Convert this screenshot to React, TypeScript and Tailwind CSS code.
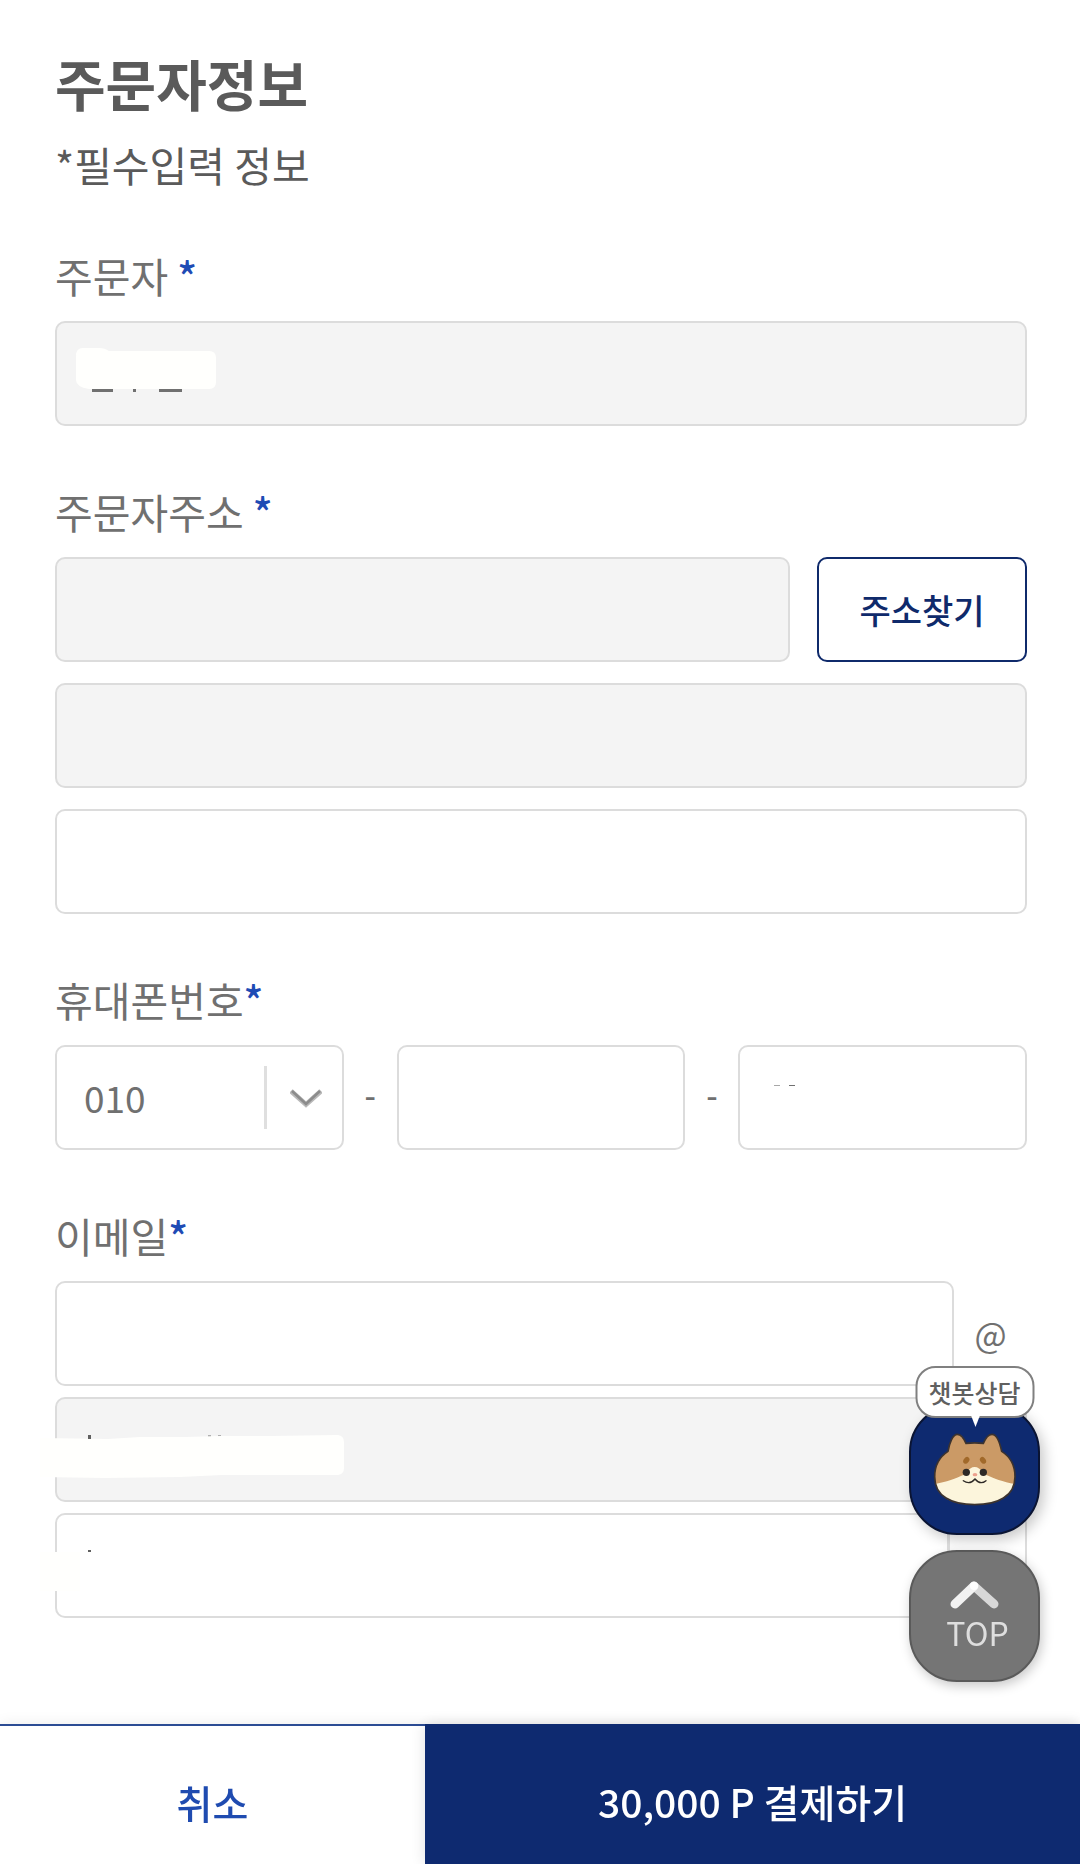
import React, { useState } from 'react';

const fieldBase = 'block h-[105px] w-full rounded-[10px] border-2 border-[#dcdcdc] px-[27px] text-[37px] text-[#707070] outline-none';

const Required = () => <span className="font-medium text-[#1e4bb5]">*</span>;

interface FieldProps {
  id: string;
  label: string;
  spaced?: boolean;
  children: React.ReactNode;
}

const Field: React.FC<FieldProps> = ({ id, label, spaced, children }) => (
  <section className="flex flex-col gap-[16px]">
    <label htmlFor={id} className="block text-[41px] leading-[60px] text-[#707070]">
      {label}{spaced ? ' ' : ''}<Required />
    </label>
    {children}
  </section>
);

interface SelectProps {
  id: string;
  label?: string;
  value: string;
  options: string[];
  onChange: (value: string) => void;
}

const Select: React.FC<SelectProps> = ({ id, label, value, options, onChange }) => (
  <div className="relative min-w-0 flex-1">
    <select
      id={id}
      aria-label={label}
      value={value}
      onChange={(e) => onChange(e.target.value)}
      className={`${fieldBase} appearance-none bg-white`}
    >
      {options.map((o) => <option key={o} value={o}>{o}</option>)}
    </select>
    <span className="pointer-events-none absolute inset-y-[21px] right-[77px] w-[3px] bg-[#dfdfdf]" />
    <svg className="pointer-events-none absolute right-[22px] top-[43px] h-[20px] w-[32px]" viewBox="0 0 32 20" fill="none">
      <path d="M1 3 L16 16.5 L31 3" stroke="#b8b8b8" strokeWidth="5" />
      <path d="M2 3 L16 16 L30 3" stroke="#8c8c8c" strokeWidth="2.6" />
    </svg>
  </div>
);

const Dash = () => (
  <span className="w-[53px] shrink-0 pb-[8px] text-center text-[32px] font-medium leading-[48px] text-[#707070]">-</span>
);

const faceOutline = 'M66 91 C70 67 80 40 94 40 C107 40 114 53 120 67 Q146 64 172 67 C178 53 186 40 198 40 C212 40 222 67 227 91 C251 106 267 132 267 167 C267 226 215 251 146 251 C77 251 26 226 26 167 C26 132 43 106 66 91 Z';

// Shiba face used on the chatbot button
const ChatbotFace = () => (
  <svg className="h-[77px] w-[88px]" viewBox="15 30 264 231">
    <defs>
      <clipPath id="face">
        <path d={faceOutline} />
      </clipPath>
    </defs>
    <g clipPath="url(#face)">
      <rect x="15" y="30" width="264" height="231" fill="#cb9a66" />
      <path d="M15 191 C55 186 92 172 110 163 C126 160 126 138 146 138 C166 138 166 160 183 163 C203 172 237 186 279 191 V261 H15 Z" fill="#fcf5dc" />
    </g>
    <path d={faceOutline} fill="none" stroke="#3c332f" strokeWidth="5" />
    <ellipse cx="121" cy="118" rx="8" ry="11" transform="rotate(38 121 118)" fill="#a1692a" />
    <ellipse cx="171" cy="118" rx="8" ry="11" transform="rotate(-38 171 118)" fill="#a1692a" />
    <circle cx="121" cy="154" r="11" fill="#2d2926" />
    <circle cx="172" cy="154" r="11" fill="#2d2926" />
    <ellipse cx="147" cy="161" rx="7" ry="5" fill="#eda08d" />
    <path d="M112 179 Q131 193 147 174 Q163 193 180 179" fill="none" stroke="#2d2926" strokeWidth="4" strokeLinecap="round" />
  </svg>
);

const App: React.FC = () => {
  const [phonePrefix, setPhonePrefix] = useState('010');
  const [emailDomain, setEmailDomain] = useState('');

  return (
    <div className="flex min-h-screen flex-col bg-white font-['Noto_Sans_CJK_KR',sans-serif]">
      <main className="flex-1 px-[53px] pb-[105px] pl-[55px] pt-[42px]">
        <h1 className="text-[55px] font-bold leading-[80px] text-[#5a5a5a]">주문자정보</h1>
        <p className="mt-[12px] text-[41px] leading-[60px] text-[#5a5a5a]">*필수입력 정보</p>

        <form className="mt-[51px] flex flex-col gap-[55px]" onSubmit={(e) => e.preventDefault()}>
          <Field id="name" label="주문자" spaced>
            <div className="relative">
              <input id="name" type="text" readOnly className={`${fieldBase} bg-[#f4f4f4]`} />
              <svg className="pointer-events-none absolute left-[20px] top-[26px] h-[46px] w-[142px]" viewBox="0 0 142 46">
                <path d="M17 41 h21 v4 h-21 z M58 41 h3 v4 h-3 z M84 41 h23 v4 h-23 z" fill="#707070" />
                <path d="M8 1 H24 Q30 1 34 4 H134 Q141 4 141 11 V35 Q141 42 134 42 H14 Q1 40 1 33 V9 Q1 1 8 1 Z" fill="#fffffd" />
              </svg>
            </div>
          </Field>

          <Field id="zip" label="주문자주소" spaced>
            <div className="flex flex-col gap-[21px]">
              <div className="flex gap-[27px]">
                <div className="min-w-0 flex-1">
                  <input id="zip" type="text" readOnly className={`${fieldBase} bg-[#f4f4f4]`} />
                </div>
                <button type="button" className="h-[105px] w-[210px] shrink-0 rounded-[10px] border-2 border-[#0f2a6b] bg-white text-[34px] font-medium text-[#0f2a6b]">
                  주소찾기
                </button>
              </div>
              <input type="text" readOnly aria-label="기본주소" className={`${fieldBase} bg-[#f4f4f4]`} />
              <input type="text" aria-label="상세주소" className={`${fieldBase} bg-white`} />
            </div>
          </Field>

          <Field id="phone" label="휴대폰번호">
            <div className="flex items-center">
              <Select id="phone" value={phonePrefix} options={['010', '011', '016', '017', '018', '019']} onChange={setPhonePrefix} />
              <Dash />
              <div className="min-w-0 flex-1">
                <input type="tel" aria-label="휴대폰번호 가운데 자리" className={`${fieldBase} bg-white`} />
              </div>
              <Dash />
              <div className="relative min-w-0 flex-1">
                <input type="tel" aria-label="휴대폰번호 끝자리" className={`${fieldBase} bg-white`} />
                <svg className="pointer-events-none absolute left-[34px] top-[38px] h-[4px] w-[26px]" viewBox="0 0 26 4">
                  <path d="M2 2.5 h6" stroke="#a8a8a8" />
                  <path d="M17 2.5 h6" stroke="#707070" />
                </svg>
              </div>
            </div>
          </Field>

          <Field id="email" label="이메일">
            <div className="flex flex-col gap-[11px]">
              <div className="flex items-center">
                <div className="min-w-0 flex-1">
                  <input id="email" type="text" className={`${fieldBase} bg-white`} />
                </div>
                <span className="w-[73px] shrink-0 text-center text-[34px] leading-[48px] text-[#707070]">@</span>
              </div>
              <div className="relative">
                <input type="text" readOnly aria-label="이메일 도메인" className={`${fieldBase} bg-[#f4f4f4]`} />
                <svg className="pointer-events-none absolute -left-[15px] top-[37px] h-[46px] w-[306px]" viewBox="0 0 306 46">
                  <path d="M168 1 h3 v3 h-3 z M178 1 h3 v3 h-3 z" fill="#b0b0b0" />
                  <path d="M0 4 L68 5 L100 3 L145 3 L180 2 L230 2 L298 1 Q304 2 304 8 V34 Q304 40 298 41 L182 41 L140 43 L65 44 L0 43 Z" fill="#fffffd" />
                  <path d="M48 1 h3 v4 h-3 z" fill="#606060" />
                </svg>
              </div>
              <div className="relative flex">
                <Select id="email-domain" label="이메일 도메인 선택" value={emailDomain} options={['', 'naver.com', 'gmail.com', 'daum.net']} onChange={setEmailDomain} />
                <svg className="pointer-events-none absolute -left-[15px] top-[35px] h-[44px] w-[60px]" viewBox="0 0 60 44">
                  <path d="M0 4 H40 V43 H0 Z" fill="#fffffd" />
                  <path d="M48 2 h3 v2 h-3 z" fill="#606060" />
                </svg>
              </div>
            </div>
          </Field>
        </form>
      </main>

      <div className="fixed bottom-[182px] right-[40px] flex flex-col items-center gap-[15px]">
        <button type="button" className="relative flex h-[131px] w-[131px] items-center justify-center rounded-[48px] border-2 border-[#0a1433] bg-[#0e2a70] shadow-[4px_5px_14px_rgba(0,0,0,0.22)]">
          <ChatbotFace />
          <span className="absolute -top-[40px] left-1/2 flex h-[52px] w-[119px] -translate-x-1/2 items-center justify-center rounded-[20px] border-2 border-[#808080] bg-white text-[25px] font-medium leading-[36px] text-[#606060]">
            챗봇상담
            <svg className="absolute left-[53px] top-[46px] h-[14px] w-[10px]" viewBox="0 0 10 14">
              <path d="M0 0 H10 L5 13 Z" fill="#fff" />
            </svg>
          </span>
        </button>
        <button
          type="button"
          onClick={() => window.scrollTo({ top: 0, behavior: 'smooth' })}
          className="flex h-[132px] w-[131px] flex-col items-center rounded-[48px] border-2 border-[#5a5a5a] bg-[#757575] pt-[26px] text-[#dedede] shadow-[2px_4px_12px_rgba(0,0,0,0.22)]"
        >
          <svg className="h-[32px] w-[50px]" viewBox="0 0 50 32" fill="none" strokeWidth="9" strokeLinecap="round">
            <path d="M24 8 L44 26" stroke="#d8d8d8" />
            <path d="M24 8 L5 26" stroke="#f2f2f2" />
            <circle cx="24" cy="8" r="4" fill="#fff" />
          </svg>
          <span className="pl-[6px] text-[32px] leading-[44px]">TOP</span>
        </button>
      </div>

      <footer className="sticky bottom-0 flex h-[140px] shadow-[0_0_14px_rgba(0,0,0,0.08)]">
        <button type="button" className="basis-[425px] border-t-2 border-[#2c4c94] bg-white pt-[14px] text-[39px] font-medium text-[#1f4bb0]">
          취소
        </button>
        <button type="submit" className="flex-1 bg-[#0e2a70] pt-[14px] text-[39px] font-medium text-white shadow-[0_0_14px_rgba(0,0,0,0.12)]">
          30,000 P 결제하기
        </button>
      </footer>
    </div>
  );
};

export default App;
